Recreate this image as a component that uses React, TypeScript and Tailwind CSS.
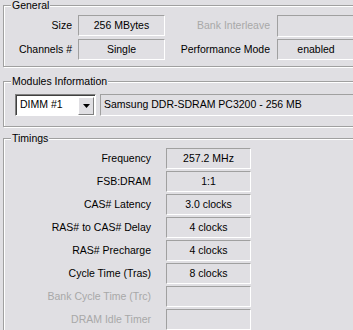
import React from "react"

const font = { fontFamily: '"Liberation Sans", Arial, sans-serif' }

function Group({ title, className, children }: { title: string; className?: string; children: React.ReactNode }) {
    return (
        <div className={"relative border border-[#a0a0a0] shadow-[inset_1px_1px_0_#ffffff,1px_1px_0_#ffffff] " + (className ?? "")}>
            <span className="absolute left-[7px] top-[-7px] bg-[#e0dfe3] px-[1px] leading-[13px] text-black">{title}</span>
            {children}
        </div>
    )
}

function Field({ value, className }: { value?: string; className?: string }) {
    return (
        <div className={"flex items-center justify-center border border-t-[#a0a0a0] border-l-[#a0a0a0] border-b-white border-r-white bg-[#e0dfe3] text-black " + (className ?? "")}>
            {value}
        </div>
    )
}

const timings = [
    { label: "Frequency", value: "257.2 MHz" },
    { label: "FSB:DRAM", value: "1:1" },
    { label: "CAS# Latency", value: "3.0 clocks" },
    { label: "RAS# to CAS# Delay", value: "4 clocks" },
    { label: "RAS# Precharge", value: "4 clocks" },
    { label: "Cycle Time (Tras)", value: "8 clocks" },
    { label: "Bank Cycle Time (Trc)", value: "", off: true },
    { label: "DRAM Idle Timer", value: "", off: true },
]

export default function App() {
    return (
        <div className="w-[353px] h-[330px] overflow-hidden bg-[#e0dfe3] text-[10.5px]" style={font}>
            <div className="w-[400px] pl-[3px]">
                {/* General */}
                <Group title="General" className="mt-[5px] pt-[9px] pb-[6px]">
                    <div className="flex flex-col gap-[3px]">
                        <div className="flex items-center h-[21px]">
                            <span className="w-[68px] text-right">Size</span>
                            <Field value="256 MBytes" className="ml-[6px] w-[87px] h-[21px]" />
                            <span className="w-[105px] text-right text-[#a8a8a8]">Bank Interleave</span>
                            <Field className="ml-[7px] w-[100px] h-[22px]" />
                        </div>
                        <div className="flex items-center h-[21px]">
                            <span className="w-[68px] text-right">Channels #</span>
                            <Field value="Single" className="ml-[6px] w-[87px] h-[21px]" />
                            <span className="w-[105px] text-right">Performance Mode</span>
                            <Field value="enabled" className="ml-[7px] w-[78px] h-[21px]" />
                        </div>
                    </div>
                </Group>

                {/* Modules Information */}
                <Group title="Modules Information" className="mt-[14px] pt-[12px] pb-[10px]">
                    <div className="flex items-center pl-[11px]">
                        <div className="flex items-center w-[81px] h-[22px] bg-white border border-t-[#808080] border-l-[#808080] border-b-white border-r-white shadow-[inset_1px_1px_0_#404040]">
                            <span className="flex-1 pl-[4px] text-black">DIMM #1</span>
                            <div className="flex items-center justify-center w-[16px] h-[18px] mr-[1px] mt-[1px] bg-[#e0dfe3] border border-t-white border-l-white border-b-[#808080] border-r-[#808080]">
                                <svg width="7" height="4" viewBox="0 0 7 4">
                                    <polygon points="0,0 7,0 3.5,4" fill="#000" />
                                </svg>
                            </div>
                        </div>
                        <div className="ml-[4px] flex-1 h-[22px] flex items-center pl-[3px] border border-t-[#a0a0a0] border-l-[#a0a0a0] border-b-white border-r-white text-black">
                            Samsung DDR-SDRAM PC3200 - 256 MB
                        </div>
                    </div>
                </Group>

                {/* Timings */}
                <Group title="Timings" className="mt-[11px] pt-[9px] pb-[10px]">
                    <div className="flex flex-col gap-[2px]">
                        {timings.map((t) => (
                            <div key={t.label} className="flex items-center h-[21px]">
                                <span className={"w-[147px] text-right " + (t.off ? "text-[#a8a8a8]" : "text-black")}>{t.label}</span>
                                <Field value={t.value} className="ml-[15px] w-[85px] h-[21px]" />
                            </div>
                        ))}
                    </div>
                </Group>
            </div>
        </div>
    )
}
